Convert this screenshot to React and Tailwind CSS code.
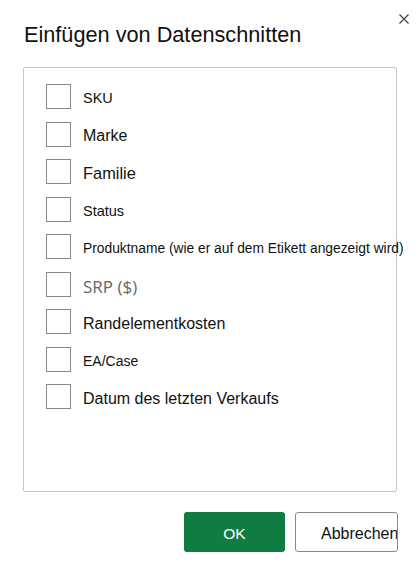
import React from 'react';

const fields = [
  { label: 'SKU', cls: 'text-[14.5px] text-[#111]' },
  { label: 'Marke', cls: 'text-[16px] text-[#111]' },
  { label: 'Familie', cls: 'text-[16.4px] text-[#111]' },
  { label: 'Status', cls: 'text-[14.5px] text-[#111]' },
  { label: 'Produktname (wie er auf dem Etikett angezeigt wird)', cls: 'text-[13.8px] text-[#111]' },
  { label: 'SRP ($)', cls: 'text-[17px] text-[#666] font-["Open_Sans",sans-serif]' },
  { label: 'Randelementkosten', cls: 'text-[16px] text-[#111]' },
  { label: 'EA/Case', cls: 'text-[14px] text-[#111]' },
  { label: 'Datum des letzten Verkaufs', cls: 'text-[16px] text-[#111]' },
];

const SliceRow = ({ label, cls }) => (
  <label className="flex items-center h-[25px] gap-[12px] cursor-pointer">
    <span className="w-[25px] h-[25px] shrink-0 border border-[#8a8a8a] bg-white" />
    <span className={`mt-1 whitespace-nowrap leading-none ${cls}`}>{label}</span>
  </label>
);

export default function App() {
  return (
    <div className="relative w-[418px] h-[577px] bg-white font-['Liberation_Sans',Arial,sans-serif] flex flex-col">
      <button className="absolute top-[14px] right-[9px] w-[10px] h-[10px] text-[#444]" aria-label="Schließen">
        <svg viewBox="0 0 10 10" className="w-[10px] h-[10px]">
          <path d="M0.5 0.5 L9.5 9.5 M9.5 0.5 L0.5 9.5" stroke="currentColor" strokeWidth="1.2" fill="none" />
        </svg>
      </button>

      <h1 className="pl-[24px] pt-[22px] text-[21.7px] leading-[25px] text-[#111] font-normal">
        Einfügen von Datenschnitten
      </h1>

      <div className="mt-[20px] ml-[23px] w-[374px] h-[425px] border border-[#c8c8c8] rounded-[2px] pt-[16px] pl-[22px]">
        <div className="flex flex-col gap-[12.5px]">
          {fields.map((f) => (
            <SliceRow key={f.label} {...f} />
          ))}
        </div>
      </div>

      <div className="flex justify-end gap-[10px] pr-[20px] mt-[20px]">
        <button className="w-[101px] h-[40px] pt-[4px] bg-[#107c41] rounded-[3px] text-white text-[15.5px]">
          OK
        </button>
        <button className="w-[103px] h-[40px] pt-[4px] border border-[#8a8a8a] rounded-[3px] bg-white text-[#111] text-[16px] text-left pl-[25px] overflow-hidden whitespace-nowrap">
          Abbrechen
        </button>
      </div>
    </div>
  );
}
